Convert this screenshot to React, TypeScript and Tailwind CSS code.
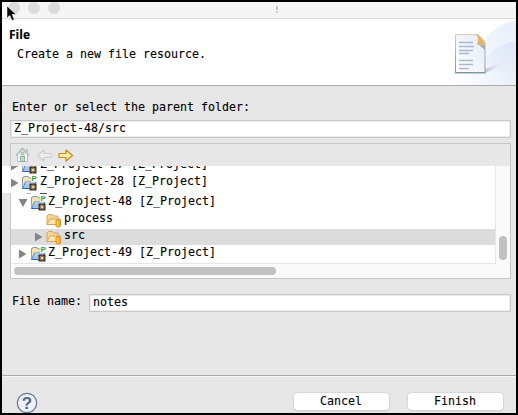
import type { ReactNode } from "react";

function ProjectIcon() {
    return (
        <svg width="17" height="17" viewBox="0 0 17 17" className="-mt-px shrink-0">
            <path d="M1.500 13.500V4L3 2.500h4l1.500 1.500H11v9.500z" fill="#f8e3ae" stroke="#9fa7a8" />
            <path d="M1.500 8V4L3 2.500h4l1.500 1.500" fill="none" stroke="#7d9ac4" />
            <path
                d="M1.500 14.500L4.500 8h10.500L12 14.500z"
                fill="#a3c6f0"
                stroke="#5585cc"
            />
            <path d="M5 9h9" stroke="#dcebfb" />
            <path d="M1.500 14.500h7" stroke="#2f63b8" />
            <rect x="10" y="0" width="6" height="8" fill="#ffffff" fillOpacity="0.8" />
            <text
                x="10.500"
                y="7"
                fontSize="8"
                fontWeight="bold"
                fontFamily="Liberation Sans, sans-serif"
                fill="#2fa344"
            >
                P
            </text>
            <rect x="8.500" y="9.500" width="7" height="7" fill="#46301c" />
            <path
                d="M12 10.500v5M9.500 13h5M10.400 11.400l3.200 3.200M13.600 11.400l-3.200 3.200"
                stroke="#f5e3c4"
                strokeWidth="0.800"
            />
        </svg>
    );
}

function FolderIcon() {
    return (
        <svg width="17" height="17" viewBox="0 0 17 17" className="-mt-px shrink-0">
            <path
                d="M1 13.500V5L2.500 3.500H6.500L8 5H12v8z"
                fill="#f5d697"
                stroke="#d6a467"
            />
            <path d="M1 13.500L4 8H14.500L11.500 13.500z" fill="#fbe5b2" stroke="#d9a665" />
            <rect
                x="10"
                y="8.500"
                width="4.500"
                height="7.500"
                rx="1.500"
                fill="#f6b22c"
                stroke="#dc951f"
            />
            <path d="M11.500 10v5" stroke="#ffdc73" />
        </svg>
    );
}

function Arrow({ open }: { open?: boolean }) {
    return (
        <svg width="10" height="10" viewBox="0 0 10 10" className="mt-[3px] shrink-0">
            <path d={open ? "M.5 1h9L5 9z" : "M1 .5v9L8.500 5z"} fill="#858585" />
        </svg>
    );
}

function HomeIcon() {
    return (
        <svg width="15" height="16" viewBox="0 0 15 16">
            <path d="M2.500 7v7.500h10V7l-5-5z" fill="#f4f4f0" stroke="#b6c2c6" />
            <path d="M11 2h2v4l-2-2z" fill="#d9b9a3" />
            <path
                d="M1 8.500l6.500-7 6.500 7"
                fill="none"
                stroke="#a9bfc6"
                strokeWidth="1.600"
            />
            <rect x="6" y="5" width="3" height="3" fill="#d9e37f" stroke="#8db0c2" strokeWidth=".7" />
            <rect x="5.500" y="9.500" width="4" height="5" fill="#d6dc80" stroke="#8db0c2" />
        </svg>
    );
}

function NavArrow({ back }: { back?: boolean }) {
    return (
        <svg
            width="16"
            height="13"
            viewBox="0 0 16 13"
            className={back ? "-scale-x-100" : ""}
        >
            <path
                d="M1 4.500h7V1l6.500 5.500L8 12V8.500H1z"
                fill={back ? "#ededed" : "#fff0ac"}
                stroke={back ? "#cdcdcd" : "#c58a17"}
                strokeWidth="1.200"
                strokeLinejoin="round"
            />
        </svg>
    );
}

function BannerArt() {
    return (
        <svg width="76" height="66" viewBox="0 0 76 66" className="ml-auto">
            <defs>
                <linearGradient id="wave" x1="0" x2="1" y1="1" y2="0.3">
                    <stop offset="0" stopColor="#ffffff" />
                    <stop offset="1" stopColor="#dce6f7" />
                </linearGradient>
                <linearGradient id="page" x1="0" x2="1" y1="1" y2="0">
                    <stop offset="0" stopColor="#ffffff" />
                    <stop offset="1" stopColor="#e3eaf7" />
                </linearGradient>
                <linearGradient id="shade">
                    <stop offset="0" stopColor="#c6c4d8" />
                    <stop offset="1" stopColor="#e7edf9" stopOpacity="0" />
                </linearGradient>
                <linearGradient id="edge" x1="0" x2="0" y1="0" y2="1">
                    <stop offset="0" stopColor="#d6cfb9" />
                    <stop offset="1" stopColor="#7f969a" />
                </linearGradient>
            </defs>
            <path d="M8 66C34 52 38 6 76 2v64z" fill="url(#wave)" opacity=".6" />
            <path d="M20 66C40 52 46 26 76 22v44z" fill="url(#wave)" opacity=".8" />
            <path d="M45 54V50L69 41 58 48z" fill="url(#shade)" />
            <path d="M15.500 15.500h22l7.500 10v28H15.500z" fill="url(#page)" stroke="url(#edge)" />
            <path d="M14 54.500h32" stroke="#8ba3a8" opacity=".5" />
            <path d="M38 25l7 6v-5z" fill="#a5abb4" />
            <path d="M36.500 15.500c2.500 2 2.500 6 1 10 2-1 5-1 7.500 0 0-3-5-9-8.500-10z" fill="#f5b25e" stroke="#d8a362" strokeWidth=".7" />
            <path
                d="M19 23.500h14M19 27.500h15M19 31.500h14M19 34.500h10M19 41.500h14M19 45.500h14M19 49.500h10"
                stroke="#aab7d4"
                strokeWidth="1.400"
            />
        </svg>
    );
}

function HelpIcon() {
    return (
        <svg width="22" height="22" viewBox="0 0 22 22">
            <circle cx="11" cy="11" r="9.700" fill="#eef1f5" stroke="#647794" strokeWidth="1.200" />
            <text
                x="11"
                y="17"
                textAnchor="middle"
                fontSize="17"
                fontWeight="bold"
                fontFamily="Liberation Sans, sans-serif"
                fill="#506585"
            >
                ?
            </text>
        </svg>
    );
}

function Row({
    className,
    icon,
    children
}: {
    className: string;
    icon: ReactNode;
    children: ReactNode;
}) {
    return (
        <div className={`flex shrink-0 items-start ${className}`}>
            {icon}
            <span className="ml-px leading-[13px]">{children}</span>
        </div>
    );
}

const inputClass = "border border-[#c9c9c9] bg-white shadow-[inset_0_0_0_1px_#ececec]";
const buttonClass =
    "h-[17px] w-[95px] rounded-[4px] bg-white pr-px text-center leading-[15px] shadow-[0_0_1px_1px_#d6d6d6,0_1px_1px_#b5b5b5]";

export default function App() {
    return (
        <div className="flex h-[415px] w-[518px] flex-col overflow-hidden border-2 border-black bg-[#e7e7e7] font-['DejaVu_Sans_Mono',monospace] text-[11.63px] whitespace-pre text-black [-webkit-text-stroke:0.12px]">
            <header className="relative flex h-[17px] shrink-0 border-b border-[#dcdcdc] bg-[#f5f5f5]">
                <div className="flex gap-2 pl-[6px]">
                    <span className="h-3 w-3 rounded-full bg-[#dcdcdc]" />
                    <span className="h-3 w-3 rounded-full bg-[#dcdcdc]" />
                    <span className="h-3 w-3 rounded-full bg-[#dcdcdc]" />
                </div>
                <div className="mt-[4px] ml-[216px] flex flex-col gap-[1px]">
                    <span className="h-[4px] w-[2px] bg-[#c3c3c3]" />
                    <span className="h-[2px] w-[2px] bg-[#cfcfcf]" />
                </div>
                <svg
                    width="11"
                    height="17"
                    viewBox="0 0 11 17"
                    className="absolute top-[3px] left-[4px]"
                >
                    <path
                        d="M1 1v12l2.800-2.500 2.300 5 2.200-1-2.300-5H10z"
                        fill="#000"
                        stroke="#fff"
                        strokeWidth=".5"
                    />
                </svg>
            </header>

            <div className="flex h-[67px] shrink-0 border-b border-[#a9aaaa] bg-white">
                <div className="pt-[9px] pl-[7px]">
                    <h1 className="font-['Open_Sans',sans-serif] text-[12px] leading-[14px] font-bold">
                        File
                    </h1>
                    <p className="mt-[5px] ml-2 leading-[14px]">Create a new file resource.</p>
                </div>
                <BannerArt />
            </div>

            <main className="flex h-[290px] shrink-0 flex-col border-b border-[#ababab] px-2 pr-[5px]">
                <label className="mt-[14px] ml-[2px] leading-[14px]">
                    Enter or select the parent folder:
                </label>
                <div className={`mt-[6px] h-[18px] pl-[3px] leading-[14px] ${inputClass}`}>
                    Z_Project-48/src
                </div>

                <div className="mt-[5px] flex h-[136px] shrink-0 flex-col border border-[#c6c6c6]">
                    <div className="flex h-[22px] shrink-0 items-center gap-[6px] pl-1">
                        <HomeIcon />
                        <NavArrow back />
                        <NavArrow />
                    </div>
                    <div className="flex h-[97px] shrink-0">
                        <div className="flex w-[484px] shrink-0 flex-col bg-white">
                            <div className="-ml-[9px] flex h-[27px] shrink-0 flex-col overflow-hidden bg-white pl-2">
                                <Row
                                    className="-mt-[8px] h-[17px]"
                                    icon={
                                        <>
                                            <Arrow />
                                            <span className="w-px" />
                                            <ProjectIcon />
                                            <span className="w-px" />
                                        </>
                                    }
                                >
                                    Z_Project-27 [Z_Project]
                                </Row>
                                <Row
                                    className="h-[17px]"
                                    icon={
                                        <>
                                            <Arrow />
                                            <span className="w-px" />
                                            <ProjectIcon />
                                            <span className="w-px" />
                                        </>
                                    }
                                >
                                    Z_Project-28 [Z_Project]
                                </Row>
                            </div>
                            {/* sliver of the row scrolled underneath */}
                            <div className="flex h-[2px] shrink-0 gap-[9px] pl-[15px]">
                                <span className="h-px w-[5px] bg-[#b4bfcb]" />
                                <span className="h-px w-[7px] bg-[#4d4d4d]" />
                            </div>
                            <Row
                                className="h-[17px] pl-[7px]"
                                icon={
                                    <>
                                        <Arrow open />
                                        <span className="w-[2px]" />
                                        <ProjectIcon />
                                    </>
                                }
                            >
                                Z_Project-48 [Z_Project]
                            </Row>
                            <Row className="h-[17px] pl-[35px]" icon={<FolderIcon />}>
                                process
                            </Row>
                            <Row
                                className="h-[16px] bg-[#dcdcdc] pl-[23px]"
                                icon={
                                    <>
                                        <Arrow />
                                        <span className="w-[2px]" />
                                        <FolderIcon />
                                    </>
                                }
                            >
                                src
                            </Row>
                            <Row
                                className="h-[18px] pt-px pl-[7px]"
                                icon={
                                    <>
                                        <Arrow />
                                        <span className="w-[2px]" />
                                        <ProjectIcon />
                                    </>
                                }
                            >
                                Z_Project-49 [Z_Project]
                            </Row>
                        </div>
                        <div className="flex flex-1 flex-col border-l border-[#e5e5e5] bg-[#fafafa] pl-[3px]">
                            <div className="mt-[70px] h-6 w-2 rounded-full bg-[#c1c1c1]" />
                        </div>
                    </div>
                    <div className="flex-1 bg-[#fafafa]">
                        <div className="h-px w-[485px] bg-[#e5e5e5]" />
                        <div className="mt-[3px] ml-[3px] h-2 w-[262px] rounded-full bg-[#c1c1c1]" />
                    </div>
                </div>

                <div className="mt-[15px] flex">
                    <label className="w-[79px] pl-[2px] leading-[14px]">File name:</label>
                    <div className={`h-[18px] flex-1 pl-[3px] leading-[15px] ${inputClass}`}>
                        notes
                    </div>
                </div>
            </main>

            <footer className="flex flex-1 items-start border-t border-[#f5f5f5] pr-[13px] pl-[14px]">
                <div className="mt-[15px]">
                    <HelpIcon />
                </div>
                <div className="mt-[16px] ml-auto flex gap-[19px]">
                    <button className={buttonClass}>Cancel</button>
                    <button className={buttonClass}>Finish</button>
                </div>
            </footer>
        </div>
    );
}
